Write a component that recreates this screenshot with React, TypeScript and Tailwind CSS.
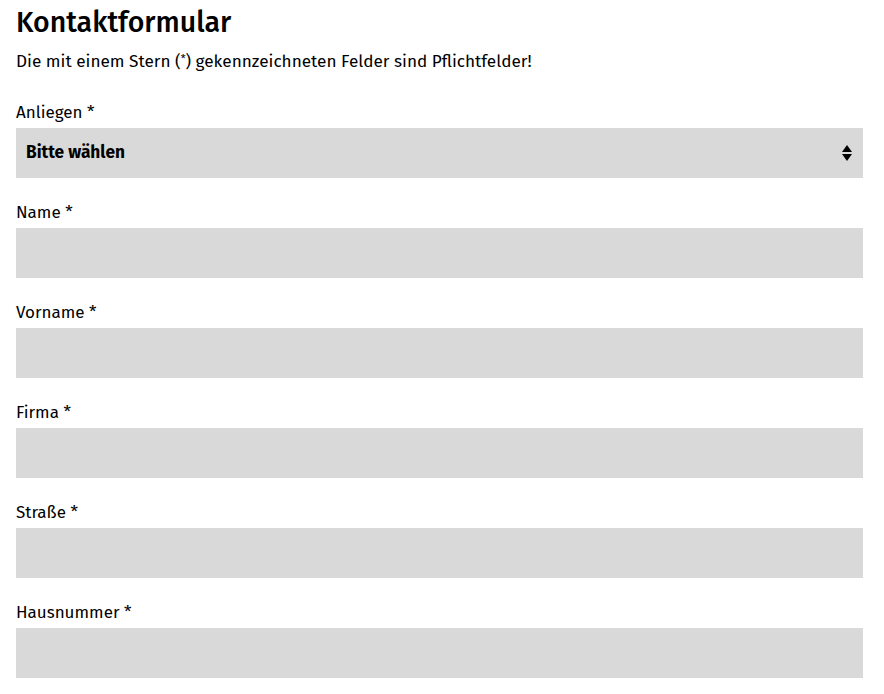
const fields = ["Name", "Vorname", "Firma", "Straße", "Hausnummer"];

function Label({ text }: { text: string }) {
  return (
    <label className="block h-6 leading-[26px] text-[17px] text-black">
      {text} *
    </label>
  );
}

export default function App() {
  return (
    <div
      className="bg-white min-h-[694px] pl-4 pr-[21px] pt-[3px] text-black"
      style={{ fontFamily: '"Fira Sans", "Open Sans", "Noto Sans", sans-serif' }}
    >
      <h1 className="text-[28.5px] leading-[40px] font-medium">Kontaktformular</h1>
      <p className="text-[17.2px] leading-6 mt-[7px]">
        Die mit einem Stern (<sup className="text-[11px]">*</sup>) gekennzeichneten Felder sind Pflichtfelder!
      </p>
      <form className="mt-[26px] flex flex-col gap-[22px]">
        <div className="flex flex-col gap-1">
          <Label text="Anliegen" />
          <div className="h-[50px] bg-[#d9d9d9] flex items-center justify-between pl-[10px] pr-[10px]">
            <span className="font-bold text-[17.3px]">Bitte wählen</span>
            <svg width="12" height="18" viewBox="0 0 12 18">
              <path d="M6 1 L11 8 L1 8 Z" fill="#000" />
              <path d="M6 17 L11 10 L1 10 Z" fill="#000" />
            </svg>
          </div>
        </div>
        {fields.map((f) => (
          <div key={f} className="flex flex-col gap-1">
            <Label text={f} />
            <div className="h-[50px] bg-[#d9d9d9]" />
          </div>
        ))}
      </form>
    </div>
  );
}
